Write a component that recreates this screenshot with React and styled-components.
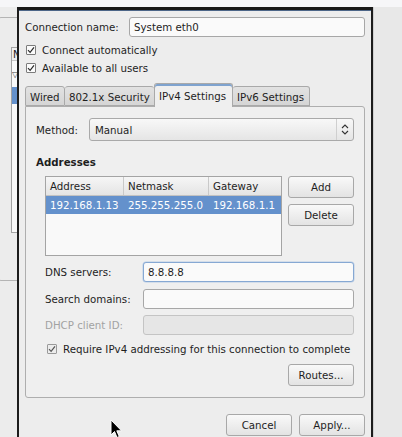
import React from "react";
import styled, { createGlobalStyle } from "styled-components";

const Global = createGlobalStyle`
  html, body { margin: 0; padding: 0; background: #ececec; }
  body { font-family: "DejaVu Sans", "Liberation Sans", sans-serif; font-size: 10.25px; color: #1e1e1e; }
  * { box-sizing: border-box; }
`;

const Root = styled.div`
  position: relative;
  width: 402px;
  height: 437px;
  overflow: hidden;
  display: flex;
  flex-direction: column;
  background: #ececec;
`;

const TopStrip = styled.div`
  height: 7px;
  flex: none;
  background: #f6f6f8;
`;

const Body = styled.div`
  flex: 1;
  display: flex;
  min-height: 0;
`;

/* ---------- background window pieces ---------- */
const LeftWin = styled.div`
  width: 17px;
  flex: none;
  background: #ececec;
  padding-top: 10px;
  overflow: hidden;
`;

const LeftFrame = styled.div`
  margin-left: -5px;
  width: 30px;
  height: 264px;
  border: 1px solid #b4b4b4;
  border-radius: 6px;
  padding-top: 29px;
  padding-left: 15px;
`;

const ListBox = styled.div`
  height: 186px;
  background: #f9f9f9;
  border: 1px solid #a3a3a3;
  display: flex;
  flex-direction: column;
  overflow: hidden;
`;

const ListHeader = styled.div`
  height: 13px;
  flex: none;
  padding-left: 1px;
  padding-top: 1px;
  font-size: 10px;
  line-height: 12px;
  background: #efefef;
  border-bottom: 1px solid #c6c6c6;
`;

const Expander = styled.div`
  height: 26px;
  flex: none;
  display: flex;
  align-items: center;
  font-size: 8px;
  color: #444;
`;

const SelRow = styled.div`
  height: 17px;
  flex: none;
  background: #6491cc;
`;

const RightWin = styled.div`
  flex: 1;
  background: #e8e8e8;
  border-left: 1px solid #cfcfcf;
`;

/* ---------- dialog ---------- */
const Dialog = styled.div`
  width: 356px;
  flex: none;
  background: #ededed;
  border-left: 2px solid #1c1c1c;
  border-right: 2px solid #1c1c1c;
  border-top: 3px solid #181818;
  box-shadow: inset 0 1px 0 #4d6688;
  padding: 7px 6px 0 6px;
  display: flex;
  flex-direction: column;
`;

const NameRow = styled.div`
  display: flex;
  align-items: center;
  height: 20px;
`;

const Label = styled.span`
  width: ${(p) => p.w || 0}px;
  flex: none;
  white-space: nowrap;
  color: ${(p) => (p.disabled ? "#a2a2a2" : "#1e1e1e")};
`;

const TextInput = styled.div`
  flex: 1;
  height: 20px;
  display: flex;
  align-items: center;
  padding-left: 4px;
  border-radius: 3px;
  white-space: nowrap;
  background: ${(p) => (p.disabled ? "#e6e6e6" : "#fafafa")};
  border: 1px solid ${(p) => (p.focused ? "#86a8d3" : p.disabled ? "#c4c4c4" : "#a7a7a7")};
  box-shadow: ${(p) => (p.focused ? "0 0 0 0.5px #b9cde6" : "none")};
`;

const CheckRow = styled.div`
  display: flex;
  align-items: center;
  height: 18px;
  padding-left: ${(p) => p.indent || 1}px;
  margin-top: ${(p) => p.mt || 0}px;
  white-space: nowrap;
`;

const Box = styled.span`
  width: 10px;
  height: 10px;
  flex: none;
  border: 1px solid ${(p) => (p.dim ? "#9a9a9a" : "#7c7c7c")};
  border-radius: 1px;
  background: ${(p) => (p.dim ? "#ececec" : "#fbfbfb")};
  margin-right: ${(p) => p.gap || 6}px;
  display: flex;
  align-items: center;
  justify-content: center;
`;

const Check = ({ dim, gap }) => (
  <Box dim={dim} gap={gap}>
    <svg width="8" height="8" viewBox="0 0 8 8">
      <path d="M1 4.2 L3.1 6.3 L7 1.3" fill="none" stroke={dim ? "#555" : "#2a2a2a"} strokeWidth="1.2" />
    </svg>
  </Box>
);

/* ---------- tabs ---------- */
const Tabs = styled.div`
  display: flex;
  align-items: flex-end;
  height: 23px;
  margin-top: 6px;
  position: relative;
  z-index: 1;
`;

const Tab = styled.div`
  width: ${(p) => p.w}px;
  flex: none;
  height: ${(p) => (p.active ? 24 : 20)}px;
  margin-bottom: ${(p) => (p.active ? -1 : 0)}px;
  display: flex;
  align-items: center;
  padding-left: 4px;
  padding-top: ${(p) => (p.active ? 0 : 1)}px;
  white-space: nowrap;
  border: 1px solid #a9a9a9;
  border-bottom: ${(p) => (p.active ? "none" : "1px solid #a9a9a9")};
  border-left-width: ${(p) => (p.first || p.active ? 1 : 0)}px;
  border-right-width: ${(p) => (p.beforeActive ? 0 : 1)}px;
  border-radius: 3px 3px 0 0;
  background: ${(p) =>
    p.active ? "#efefef" : "linear-gradient(#e2e2e2, #d5d5d5)"};
  box-shadow: ${(p) => (p.active ? "inset 0 2px 0 #7fa3cf" : "none")};
`;

const Panel = styled.div`
  border: 1px solid #aeaeae;
  border-radius: 0 3px 3px 3px;
  background: #efefef;
  height: 292px;
  padding: 11px 10px 10px 10px;
  display: flex;
  flex-direction: column;
`;

const MethodRow = styled.div`
  display: flex;
  align-items: center;
  height: 23px;
`;

const Combo = styled.div`
  flex: 1;
  height: 23px;
  display: flex;
  align-items: center;
  border: 1px solid #a9a9a9;
  border-radius: 3px;
  background: linear-gradient(#f8f8f8, #e5e5e5);
  padding-left: 5px;
`;

const ComboText = styled.span`
  flex: 1;
`;

const ComboArrow = styled.span`
  width: 17px;
  height: 100%;
  border-left: 1px solid #cfcfcf;
  display: flex;
  align-items: center;
  justify-content: center;
`;

const SectionTitle = styled.div`
  font-weight: bold;
  line-height: 14px;
  margin-top: 14px;
`;

const AddrArea = styled.div`
  display: flex;
  gap: 6px;
  margin-top: 7px;
  padding-left: 9px;
`;

const Table = styled.div`
  width: 237px;
  height: 80px;
  flex: none;
  border: 1px solid #a4a4a4;
  background: #f9f9f9;
`;

const Grid = styled.div`
  display: grid;
  grid-template-columns: 78px 85px 1fr;
  height: ${(p) => p.h}px;
  background: ${(p) =>
    p.head ? "linear-gradient(#f6f6f6, #e4e4e4)" : p.sel ? "#6491cc" : "transparent"};
  color: ${(p) => (p.sel ? "#ffffff" : "#1e1e1e")};
  border-bottom: ${(p) => (p.head ? "1px solid #c2c2c2" : "none")};
`;

const Cell = styled.div`
  display: flex;
  align-items: center;
  padding-left: 4px;
  white-space: nowrap;
  border-right: ${(p) => (p.sep ? "1px solid #c9c9c9" : "none")};
`;

const BtnCol = styled.div`
  display: flex;
  flex-direction: column;
  gap: 6px;
`;

const Button = styled.div`
  width: 66px;
  height: 22px;
  display: flex;
  align-items: center;
  justify-content: center;
  border: 1px solid #a8a8a8;
  border-radius: 3px;
  background: linear-gradient(#f9f9f9, #e3e3e3);
  white-space: nowrap;
`;

const Form = styled.div`
  display: flex;
  flex-direction: column;
  gap: 6.5px;
  margin-top: 6px;
  padding-left: 9px;
`;

const FormRow = styled.div`
  display: flex;
  align-items: center;
  height: 20px;
`;

const RightRow = styled.div`
  display: flex;
  justify-content: flex-end;
  gap: 7px;
  margin-top: ${(p) => p.mt || 0}px;
`;

const CursorWrap = styled.div`
  position: absolute;
  left: 110px;
  top: 419px;
`;

const Cursor = () => (
  <CursorWrap>
    <svg width="14" height="20" viewBox="0 0 14 20">
      <path d="M1 1 L1 16 L4.5 12.5 L7 18.5 L9.3 17.5 L6.8 11.8 L11.5 11.8 Z" fill="#000" stroke="#fff" strokeWidth="1" />
    </svg>
  </CursorWrap>
);

export default function App() {
  return (
    <>
      <Global />
      <Root>
        <TopStrip />
        <Body>
          <LeftWin>
            <LeftFrame>
              <ListBox>
                <ListHeader>N</ListHeader>
                <Expander>▽</Expander>
                <SelRow />
              </ListBox>
            </LeftFrame>
          </LeftWin>
          <Dialog>
            <NameRow>
              <Label w={104}>Connection name:</Label>
              <TextInput>System eth0</TextInput>
            </NameRow>
            <CheckRow mt={4}>
              <Check />
              Connect automatically
            </CheckRow>
            <CheckRow>
              <Check />
              Available to all users
            </CheckRow>
            <Tabs>
              <Tab w={40} first>Wired</Tab>
              <Tab w={89} beforeActive>802.1x Security</Tab>
              <Tab w={79} active>IPv4 Settings</Tab>
              <Tab w={77}>IPv6 Settings</Tab>
            </Tabs>
            <Panel>
              <MethodRow>
                <Label w={53}>Method:</Label>
                <Combo>
                  <ComboText>Manual</ComboText>
                  <ComboArrow>
                    <svg width="8" height="11" viewBox="0 0 8 11">
                      <path d="M1 4 L4 1 L7 4 M1 7 L4 10 L7 7" fill="none" stroke="#333" strokeWidth="1.1" />
                    </svg>
                  </ComboArrow>
                </Combo>
              </MethodRow>
              <SectionTitle>Addresses</SectionTitle>
              <AddrArea>
                <Table>
                  <Grid head h={19}>
                    <Cell sep>Address</Cell>
                    <Cell sep>Netmask</Cell>
                    <Cell>Gateway</Cell>
                  </Grid>
                  <Grid sel h={18}>
                    <Cell>192.168.1.13</Cell>
                    <Cell>255.255.255.0</Cell>
                    <Cell>192.168.1.1</Cell>
                  </Grid>
                </Table>
                <BtnCol>
                  <Button>Add</Button>
                  <Button>Delete</Button>
                </BtnCol>
              </AddrArea>
              <Form>
                <FormRow>
                  <Label w={98}>DNS servers:</Label>
                  <TextInput focused>8.8.8.8</TextInput>
                </FormRow>
                <FormRow>
                  <Label w={98}>Search domains:</Label>
                  <TextInput />
                </FormRow>
                <FormRow>
                  <Label w={98} disabled>DHCP client ID:</Label>
                  <TextInput disabled />
                </FormRow>
              </Form>
              <CheckRow indent={11} mt={5}>
                <Check dim />
                Require IPv4 addressing for this connection to complete
              </CheckRow>
              <RightRow mt={6}>
                <Button>Routes...</Button>
              </RightRow>
            </Panel>
            <RightRow mt={16}>
              <Button>Cancel</Button>
              <Button>Apply...</Button>
            </RightRow>
          </Dialog>
          <RightWin />
        </Body>
        <Cursor />
      </Root>
    </>
  );
}
